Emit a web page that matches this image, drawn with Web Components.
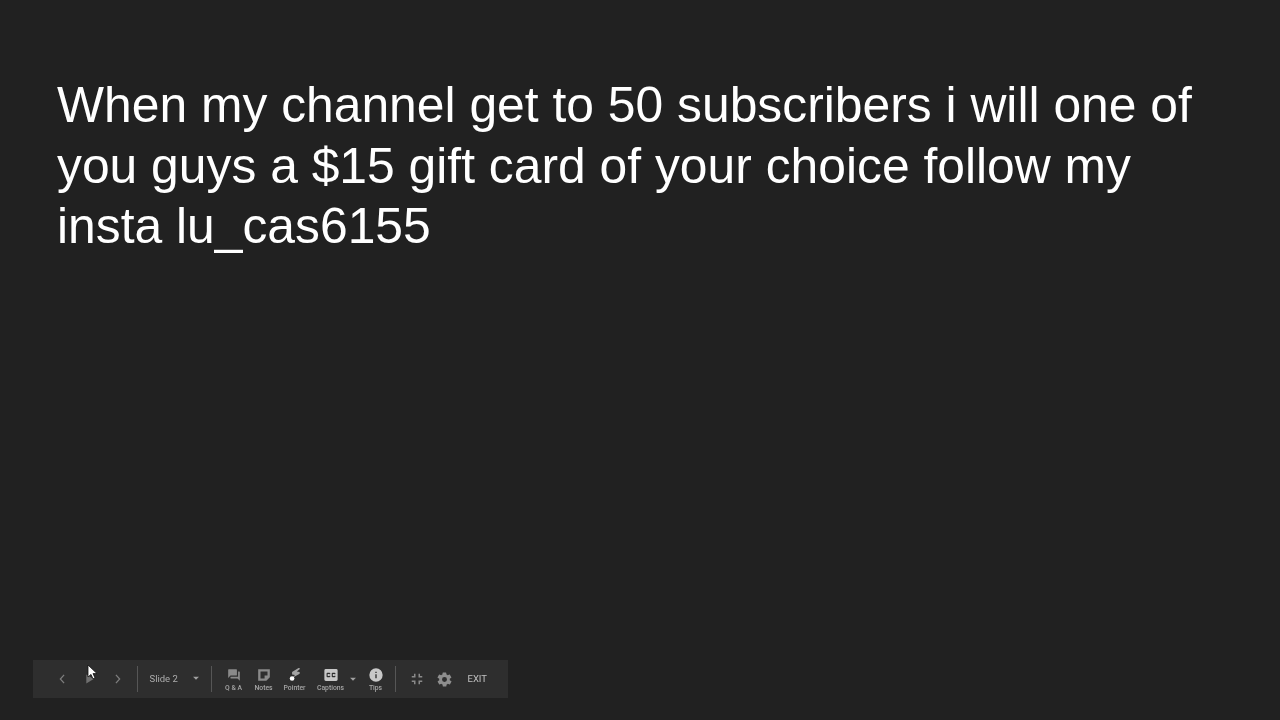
<!DOCTYPE html>
<html lang="en">
<head>
<meta charset="utf-8">
<title>Slide 2</title>
<style>
  html, body { margin: 0; height: 100%; background: #212121; overflow: hidden; }
  body { display: flex; flex-direction: column; justify-content: space-between; height: 720px; font-family: "Liberation Sans", Arial, sans-serif; }
</style>
</head>
<body>
<slide-text>When my channel get to 50 subscribers i will one of you guys a $15 gift card of your choice follow my insta lu_cas6155</slide-text>
<present-toolbar>
  <nav-icon width="28" kind="prev"></nav-icon>
  <nav-icon width="28" kind="play"></nav-icon>
  <nav-icon width="28" kind="next"></nav-icon>
  <bar-divider style="margin-left:5px"></bar-divider>
  <slide-picker>Slide 2</slide-picker>
  <bar-divider></bar-divider>
  <tool-button width="30" kind="qa" style="margin-left:7px">Q &amp; A</tool-button>
  <tool-button width="30" kind="notes">Notes</tool-button>
  <tool-button width="32" kind="pointer">Pointer</tool-button>
  <tool-button width="40" kind="cc">Captions</tool-button>
  <nav-icon width="4" kind="caret"></nav-icon>
  <tool-button width="36" kind="tips" style="margin-left:3px">Tips</tool-button>
  <bar-divider style="margin-left:1px"></bar-divider>
  <nav-icon width="28" kind="shrink" style="margin-left:7px"></nav-icon>
  <nav-icon width="28" kind="gear"></nav-icon>
  <exit-label>EXIT</exit-label>
  <mouse-cursor></mouse-cursor>
</present-toolbar>
<script>
const ICONS = {
  prev: '<path d="M14.5 7 10 12l4.500 5" fill="none" stroke="currentColor" stroke-width="1.5"/>',
  next: '<path d="M9.500 7 14 12l-4.500 5" fill="none" stroke="currentColor" stroke-width="1.5"/>',
  play: '<path d="M8 7v10l8-5z" fill="currentColor"/>',
  caret: '<path d="M7 10l5 5 5-5z" fill="currentColor"/>',
  shrink: '<path d="M5 16h3v3h2v-5H5zm3-8H5v2h5V5H8zm6 11h2v-3h3v-2h-5zm2-11V5h-2v5h5V8z" fill="currentColor"/>',
  gear: '<path d="M19.400 13a7.500 7.500 0 0 0 0-2l2.100-1.600a.5.5 0 0 0 .1-.6l-2-3.500a.5.5 0 0 0-.6-.2l-2.500 1a7.300 7.300 0 0 0-1.700-1l-.4-2.600a.5.5 0 0 0-.5-.4h-4a.5.5 0 0 0-.5.4l-.4 2.600a7.600 7.600 0 0 0-1.700 1l-2.500-1a.5.5 0 0 0-.6.2l-2 3.500a.5.5 0 0 0 .1.6L4.600 11a7.900 7.900 0 0 0 0 2l-2.100 1.600a.5.5 0 0 0-.1.6l2 3.500c.1.2.4.3.6.2l2.500-1c.5.4 1.100.7 1.700 1l.4 2.600c0 .2.2.4.5.4h4c.3 0 .5-.2.5-.4l.4-2.600c.6-.3 1.200-.6 1.700-1l2.500 1c.2.1.5 0 .6-.2l2-3.500a.5.5 0 0 0-.1-.6zM12 15.500a3.500 3.500 0 1 1 0-7 3.500 3.500 0 0 1 0 7z" fill="currentColor"/>',
  qa: '<path d="M21 6h-2v9H6v2c0 .6.4 1 1 1h11l4 4V7c0-.6-.4-1-1-1zm-4 6V3c0-.6-.4-1-1-1H3c-.6 0-1 .4-1 1v14l4-4h10c.6 0 1-.4 1-1z" fill="currentColor"/>',
  notes: '<path d="M2 2h20v14l-6 6H2zM6 6v12h7v-5h5V6z" fill="currentColor" fill-rule="evenodd"/>',
  pointer: '<path d="M18 0 7 7v4l5 1-5 5 13-7v-3l-5-1 5-4V0z" fill="currentColor"/><circle cx="7" cy="18" r="4" fill="#fff"/>',
  cc: '<path d="M19 4H5a2 2 0 0 0-2 2v12a2 2 0 0 0 2 2h14a2 2 0 0 0 2-2V6a2 2 0 0 0-2-2zm-8 7H9.500v-.5h-2v3h2V13H11v1a1 1 0 0 1-1 1H7a1 1 0 0 1-1-1v-4a1 1 0 0 1 1-1h3a1 1 0 0 1 1 1zm7 0h-1.500v-.5h-2v3h2V13H18v1a1 1 0 0 1-1 1h-3a1 1 0 0 1-1-1v-4a1 1 0 0 1 1-1h3a1 1 0 0 1 1 1z" fill="currentColor"/>',
  tips: '<path d="M12 2a10 10 0 1 0 0 20 10 10 0 0 0 0-20zm1 15h-2v-6h2zm0-8h-2V7h2z" fill="currentColor"/>'
};

// some glyphs sit tighter in their box than the 24 unit grid
const VIEWS = { cc: '2.5 2.5 19 19', tips: '1.5 1.5 21 21' };

const TONES = {
  prev: '#7e7e7e', next: '#7e7e7e', play: '#707070', caret: '#a0a0a0',
  shrink: '#8a8a8a', gear: '#8e8e8e',
  qa: '#8a8a8a', notes: '#8a8a8a', pointer: '#a4a4a4', cc: '#c8c8c8', tips: '#c8c8c8'
};

function icon(kind, size) {
  const view = VIEWS[kind] || '0 0 24 24';
  return `<svg viewBox="${view}" width="${size}" height="${size}" style="color:${TONES[kind]}" aria-hidden="true">${ICONS[kind]}</svg>`;
}

class SlideText extends HTMLElement {
  constructor() {
    super();
    this.attachShadow({ mode: 'open' });
    this.shadowRoot.innerHTML = `
      <style>
        :host {
          display: block;
          padding: 75px 80px 0 57px;
          color: #fff;
          font: 49.8px/60.5px "Liberation Sans", Arial, sans-serif;
        }
      </style>
      <slot></slot>
    `;
  }
}

class PresentToolbar extends HTMLElement {
  constructor() {
    super();
    this.attachShadow({ mode: 'open' });
    this.shadowRoot.innerHTML = `
      <style>
        :host {
          position: relative;
          display: flex;
          align-items: center;
          box-sizing: border-box;
          width: 475px;
          height: 38px;
          margin: 0 0 22px 33px;
          padding-left: 14.5px;
          background: #2e2e2e;
          filter: blur(0.35px);
        }
      </style>
      <slot></slot>
    `;
  }
}

class NavIcon extends HTMLElement {
  constructor() {
    super();
    this.attachShadow({ mode: 'open' });
  }

  connectedCallback() {
    const kind = this.getAttribute('kind');
    const sizes = { caret: 14, gear: 17, shrink: 18, prev: 20, next: 20 };
    this.shadowRoot.innerHTML = `
      <style>
        :host {
          display: flex;
          align-items: center;
          justify-content: center;
          flex: none;
          width: ${this.getAttribute('width')}px;
          height: 38px;
        }
        svg { flex: none; }
      </style>
      ${icon(kind, sizes[kind] || 22)}
    `;
  }
}

class BarDivider extends HTMLElement {
  constructor() {
    super();
    this.attachShadow({ mode: 'open' });
    this.shadowRoot.innerHTML = `
      <style>
        :host { display: block; flex: none; width: 1px; height: 26px; background: #565656; }
      </style>
    `;
  }
}

class SlidePicker extends HTMLElement {
  constructor() {
    super();
    this.attachShadow({ mode: 'open' });
    this.shadowRoot.innerHTML = `
      <style>
        :host {
          display: flex;
          align-items: center;
          flex: none;
          box-sizing: border-box;
          width: 73px;
          padding: 0 0 2px 12px;
          color: #adadad;
          font: 9.5px "Roboto", "Liberation Sans", sans-serif;
        }
        svg { margin-left: 11px; }
      </style>
      <slot></slot>
      ${icon('caret', 14)}
    `;
  }
}

class ToolButton extends HTMLElement {
  constructor() {
    super();
    this.attachShadow({ mode: 'open' });
  }

  connectedCallback() {
    this.shadowRoot.innerHTML = `
      <style>
        :host {
          display: flex;
          flex-direction: column;
          align-items: center;
          flex: none;
          width: ${this.getAttribute('width')}px;
          padding-top: 1px;
          color: #a6a6a6;
          font: 500 6.8px/8px "Roboto", "Liberation Sans", sans-serif;
          white-space: nowrap;
        }
        svg { display: block; margin-bottom: 2px; }
      </style>
      ${icon(this.getAttribute('kind'), 14)}
      <slot></slot>
    `;
  }
}

class ExitLabel extends HTMLElement {
  constructor() {
    super();
    this.attachShadow({ mode: 'open' });
    this.shadowRoot.innerHTML = `
      <style>
        :host {
          display: block;
          flex: none;
          margin-left: 9px;
          padding-bottom: 2px;
          color: #c0c0c0;
          font: 9.5px "Roboto", "Liberation Sans", sans-serif;
        }
      </style>
      <slot></slot>
    `;
  }
}

class MouseCursor extends HTMLElement {
  constructor() {
    super();
    this.attachShadow({ mode: 'open' });
    this.shadowRoot.innerHTML = `
      <style>
        :host { position: absolute; left: 54px; top: 4px; width: 10px; height: 16px; }
        svg { display: block; }
      </style>
      <svg viewBox="0 0 10 16" width="10" height="16" aria-hidden="true">
        <path d="M1 1v12l3-2.600 2 4.400 2-.9-2-4.300h4z" fill="#fff" stroke="#111" stroke-width=".8"/>
      </svg>
    `;
  }
}

customElements.define('slide-text', SlideText);
customElements.define('present-toolbar', PresentToolbar);
customElements.define('nav-icon', NavIcon);
customElements.define('bar-divider', BarDivider);
customElements.define('slide-picker', SlidePicker);
customElements.define('tool-button', ToolButton);
customElements.define('exit-label', ExitLabel);
customElements.define('mouse-cursor', MouseCursor);
</script>
</body>
</html>
